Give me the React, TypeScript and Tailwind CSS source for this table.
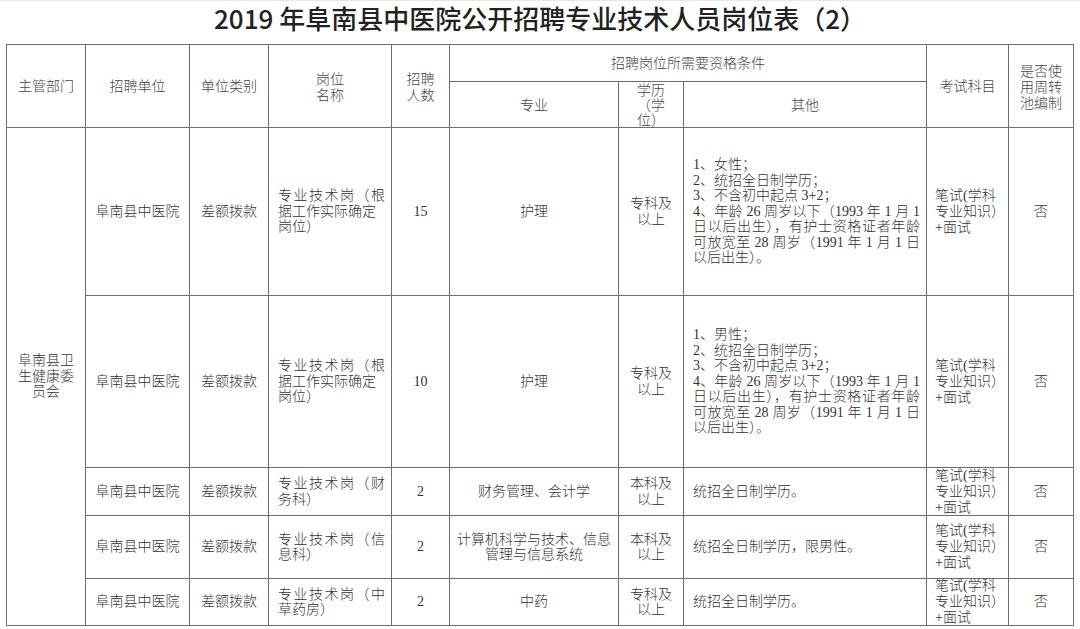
import React from 'react'

type Row = {
  post: string[]
  count: string
  major: string[]
  edu: string[]
  other: { text: string; full?: boolean }[]
}

const NURSE = (sex: string) => [
  { text: `1、${sex}；` },
  { text: '2、统招全日制学历；' },
  { text: '3、不含初中起点 3+2；' },
  { text: '4、年龄 26 周岁以下（1993 年 1 月 1', full: true },
  { text: '日以后出生），有护士资格证者年龄', full: true },
  { text: '可放宽至 28 周岁（1991 年 1 月 1 日', full: true },
  { text: '以后出生）。' },
]

const ROWS: Row[] = [
  {
    post: ['专业技术岗（根', '据工作实际确定', '岗位）'],
    count: '15',
    major: ['护理'],
    edu: ['专科及', '以上'],
    other: NURSE('女性'),
  },
  {
    post: ['专业技术岗（根', '据工作实际确定', '岗位）'],
    count: '10',
    major: ['护理'],
    edu: ['专科及', '以上'],
    other: NURSE('男性'),
  },
  {
    post: ['专业技术岗（财', '务科）'],
    count: '2',
    major: ['财务管理、会计学'],
    edu: ['本科及', '以上'],
    other: [{ text: '统招全日制学历。' }],
  },
  {
    post: ['专业技术岗（信', '息科）'],
    count: '2',
    major: ['计算机科学与技术、信息', '管理与信息系统'],
    edu: ['本科及', '以上'],
    other: [{ text: '统招全日制学历，限男性。' }],
  },
  {
    post: ['专业技术岗（中', '草药房）'],
    count: '2',
    major: ['中药'],
    edu: ['专科及', '以上'],
    other: [{ text: '统招全日制学历。' }],
  },
]

// each cell draws its own right + bottom rule, the grid draws left + top
const cell = 'border-r border-b border-[#6e6e6e] flex flex-col justify-center min-w-0'
const mid = `${cell} items-center text-center`
const left = `${cell} items-stretch`
const head = "[font-family:'Noto_Sans_CJK_SC','Noto_Sans',sans-serif] text-[#444]"

function Lines({ lines }: { lines: string[] }) {
  return (
    <>
      {lines.map((l, i) => (
        <div key={i}>{l}</div>
      ))}
    </>
  )
}

export default function App() {
  return (
    <div className="w-[1080px] h-[629px] bg-white overflow-hidden border-t border-[#e6e6e6] text-[#333]">
      <div className="h-[43px] pt-[1px] text-center text-[26px] leading-[32px] font-medium text-[#222] [font-family:'Noto_Sans_CJK_SC','Noto_Sans',sans-serif]">
        2019 年阜南县中医院公开招聘专业技术人员岗位表（2）
      </div>

      <div className="ml-[6px] w-max grid grid-cols-[79px_104px_79px_123px_58px_169px_65px_243px_82px_65px] grid-rows-[37px_46px_168px_172px_48px_63px_47px] border-l border-t border-[#6e6e6e] text-[14px] leading-[15.5px] font-light [font-family:'Liberation_Serif','Noto_Sans_CJK_SC',serif]">
        {/* ── header ── */}
        <div className={`${mid} ${head} row-span-2`}>主管部门</div>
        <div className={`${mid} ${head} row-span-2`}>招聘单位</div>
        <div className={`${mid} ${head} row-span-2`}>单位类别</div>
        <div className={`${mid} ${head} row-span-2 leading-[16px]`}>
          <Lines lines={['岗位', '名称']} />
        </div>
        <div className={`${mid} ${head} row-span-2 leading-[16px]`}>
          <Lines lines={['招聘', '人数']} />
        </div>
        <div className={`${mid} ${head} col-span-3`}>招聘岗位所需要资格条件</div>
        <div className={`${mid} ${head} row-span-2`}>考试科目</div>
        <div className={`${mid} ${head} row-span-2 leading-[16px]`}>
          <Lines lines={['是否使', '用周转', '池编制']} />
        </div>
        <div className={`${mid} ${head}`}>专业</div>
        <div className={`${mid} ${head} leading-[15px]`}>
          <Lines lines={['学历', '（学', '位）']} />
        </div>
        <div className={`${mid} ${head}`}>其他</div>

        {/* ── body ── */}
        {ROWS.map((r, i) => (
          <React.Fragment key={i}>
            {i === 0 && (
              <div className={`${mid} row-span-5 px-[8px]`}>
                <Lines lines={['阜南县卫', '生健康委', '员会']} />
              </div>
            )}
            <div className={mid}>阜南县中医院</div>
            <div className={mid}>差额拨款</div>
            <div className={`${left} pl-[9px] pr-[6px]`}>
              {r.post.map((l, k) => (
                <div key={k} className={k === 0 ? 'text-justify [text-align-last:justify]' : ''}>
                  {l}
                </div>
              ))}
            </div>
            <div className={mid}>{r.count}</div>
            <div className={mid}>
              <Lines lines={r.major} />
            </div>
            <div className={mid}>
              <Lines lines={r.edu} />
            </div>
            <div className={`${left} pl-[9px] pr-[6px]`}>
              {r.other.map((o, k) => (
                <div
                  key={k}
                  className={`whitespace-nowrap ${o.full ? 'text-justify [text-align-last:justify]' : ''}`}
                >
                  {o.text}
                </div>
              ))}
            </div>
            <div className={`${left} pl-[8px] leading-[16px]`}>
              <Lines lines={['笔试(学科', '专业知识）', '+面试']} />
            </div>
            <div className={mid}>否</div>
          </React.Fragment>
        ))}
      </div>
    </div>
  )
}
